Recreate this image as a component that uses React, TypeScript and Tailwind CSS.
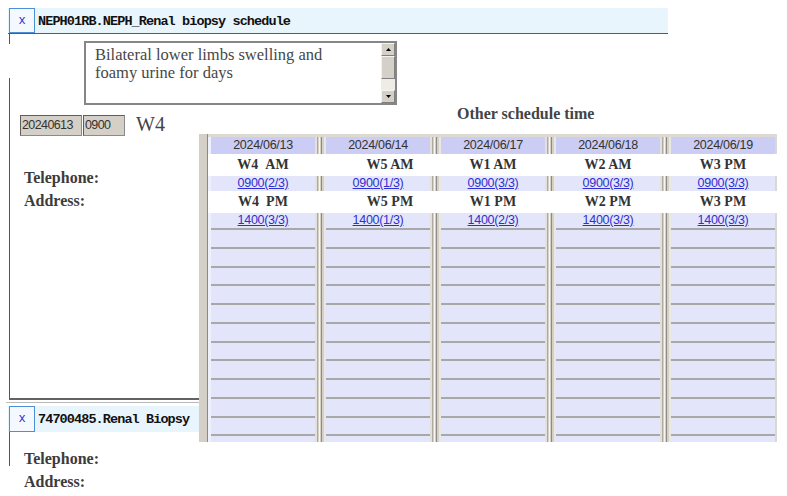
import React, { Fragment } from 'react';

type Col = {
  date: string;
  am: string;
  amLink: string;
  pm: string;
  pmLink: string;
  shift?: boolean;
};

const cols: Col[] = [
  { date: '2024/06/13', am: 'W4\u00a0\u00a0AM', amLink: '0900(2/3)', pm: 'W4\u00a0\u00a0PM', pmLink: '1400(3/3)' },
  { date: '2024/06/14', am: 'W5 AM', amLink: '0900(1/3)', pm: 'W5 PM', pmLink: '1400(1/3)', shift: true },
  { date: '2024/06/17', am: 'W1 AM', amLink: '0900(3/3)', pm: 'W1 PM', pmLink: '1400(2/3)' },
  { date: '2024/06/18', am: 'W2 AM', amLink: '0900(3/3)', pm: 'W2 PM', pmLink: '1400(3/3)' },
  { date: '2024/06/19', am: 'W3 PM', amLink: '0900(3/3)', pm: 'W3 PM', pmLink: '1400(3/3)' },
];

function Sep() {
  return (
    <div className="flex w-[11px] shrink-0">
      <div className="w-[2px] bg-[#e4e1da]" />
      <div className="w-[1px] bg-[#aeaaa2]" />
      <div className="w-[1px] bg-[#d4d0c8]" />
      <div className="w-[1px] bg-[#f7f6f3]" />
      <div className="w-[1px] bg-[#d4d0c8]" />
      <div className="w-[1px] bg-[#8f8b84]" />
      <div className="w-[2px] bg-[#d4d0c8]" />
      <div className="w-[2px] bg-[#eae8e2]" />
    </div>
  );
}

function BandRow({ className, cells }: { className: string; cells: React.ReactNode[] }) {
  return (
    <div className={`flex shrink-0 ${className}`}>
      <div className="w-[3px] shrink-0 bg-[#eef0fc]" />
      {cells.map((c, i) => (
        <Fragment key={i}>
          {c}
          {i < cells.length - 1 && <Sep />}
        </Fragment>
      ))}
      <div className="w-[2px] shrink-0 bg-[#dad8d2]" />
    </div>
  );
}

function TitleRow({ pm }: { pm: boolean }) {
  return (
    <div className="flex h-[22px] shrink-0 gap-[11px] bg-white pl-[3px]">
      {cols.map((c, i) => (
        <div
          key={i}
          className={`flex w-[104px] shrink-0 items-center justify-center font-['Liberation_Serif',serif] text-[14px] font-bold leading-[22px] text-[#333] ${c.shift ? 'pl-[24px]' : ''}`}
        >
          {pm ? c.pm : c.am}
        </div>
      ))}
    </div>
  );
}

function LinkRow({ pm }: { pm: boolean }) {
  return (
    <BandRow
      className="h-[15px]"
      cells={cols.map((c, i) => (
        <div key={i} className="flex w-[104px] shrink-0 items-center justify-center bg-[#e3e5fa]">
          <a className="font-['Liberation_Sans',sans-serif] text-[12.5px] leading-[15px] tracking-[-0.3px] text-[#2f2fd0] underline">
            {pm ? c.pmLink : c.amLink}
          </a>
        </div>
      ))}
    />
  );
}

function XButton({ h }: { h: string }) {
  return (
    <div
      className={`flex w-[26px] shrink-0 items-center justify-center border border-[#4d8fd6] bg-[#f3f9ff] font-['Liberation_Mono',monospace] text-[12px] leading-none text-[#2b2bd6] ${h}`}
    >
      x
    </div>
  );
}

function Arrow({ up }: { up: boolean }) {
  return (
    <svg width="5" height="3" viewBox="0 0 5 3">
      <path d={up ? 'M0 3h5L2.5 0z' : 'M0 0h5L2.5 3z'} fill="#000" />
    </svg>
  );
}

function Raised({ className, children }: { className: string; children?: React.ReactNode }) {
  return (
    <div
      className={`flex items-center justify-center border border-t-[#f4f3ef] border-l-[#f4f3ef] border-b-[#808080] border-r-[#808080] bg-[#d4d0c8] ${className}`}
    >
      {children}
    </div>
  );
}

function ContactLines() {
  return (
    <div className="flex flex-col font-['Liberation_Serif',serif] text-[16px] font-bold leading-[23px] text-[#3c3c3c]">
      <span>Telephone:</span>
      <span>Address:</span>
    </div>
  );
}

export default function App() {
  const emptyRows = Array.from({ length: 12 }, (_, i) => i);
  return (
    <div className="relative h-[496px] w-[787px] overflow-hidden bg-white pl-[8px] pt-[8px] font-['Liberation_Serif',serif]">
      {/* Panel 1 header */}
      <div className="flex h-[26px] w-[660px] items-start border-b border-[#5a5a5a] bg-[#e9f5fd]">
        <div className="ml-[1px]">
          <XButton h="h-[25px]" />
        </div>
        <span className="ml-[3px] pt-[5px] font-['Liberation_Mono',monospace] text-[13.5px] font-bold leading-[17px] tracking-[-0.9px] text-[#111]">
          NEPH01RB.NEPH_Renal biopsy schedule
        </span>
      </div>

      {/* Panel 1 body */}
      <div className="ml-[1px] flex h-[366px] w-[659px] border-b-2 border-[#626262]">
        <div className="flex w-[1px] shrink-0 flex-col">
          <div className="h-[10px] bg-[#555]" />
          <div className="h-[34px]" />
          <div className="flex-1 bg-[#555]" />
        </div>
        <div className="flex flex-1 flex-col">
          {/* textarea */}
          <div className="ml-[74px] mt-[7px] flex h-[64px] w-[313px] border-2 border-[#868686] bg-white">
            <div className="flex flex-1 flex-col pl-[9px] pt-[3px] text-[16.5px] leading-[18px] text-[#474747]">
              <span>Bilateral lower limbs swelling and</span>
              <span>foamy urine for days</span>
            </div>
            <div className="flex w-[14px] flex-col">
              <Raised className="h-[13px]">
                <Arrow up />
              </Raised>
              <Raised className="h-[23px]" />
              <div className="flex-1 bg-[#eeece7]" />
              <Raised className="h-[13px]">
                <Arrow up={false} />
              </Raised>
            </div>
          </div>

          {/* date row */}
          <div className="ml-[10px] mt-[10px] flex items-start">
            <div className="flex h-[21px] w-[62px] items-center border border-[#8a8a8a] border-l-[#5e5e5e] border-t-[#5e5e5e] bg-[#d4d0c8] pl-[1px] font-['Liberation_Sans',sans-serif] text-[12.5px] tracking-[-0.6px] text-[#333]">
              20240613
            </div>
            <div className="ml-[1px] flex h-[21px] w-[42px] items-center border border-[#8a8a8a] border-l-[#5e5e5e] border-t-[#5e5e5e] bg-[#d4d0c8] pl-[1px] font-['Liberation_Sans',sans-serif] text-[12.5px] tracking-[-0.6px] text-[#333]">
              0900
            </div>
            <span className="ml-[11px] text-[20px] leading-[18px] text-[#444]">W4</span>
          </div>

          <div className="mt-[30px] pl-[14px]">
            <ContactLines />
          </div>
        </div>
      </div>

      {/* separator line */}
      <div className="-ml-[2px] mt-[2px] h-[1px] w-[662px] bg-[#b9b9b9]" />

      {/* Panel 2 header */}
      <div className="mt-[3px] flex h-[26px] w-[660px] items-start bg-[#e9f5fd]">
        <div className="ml-[1px]">
          <XButton h="h-[26px]" />
        </div>
        <span className="ml-[3px] pt-[5px] font-['Liberation_Mono',monospace] text-[13.5px] font-bold leading-[17px] tracking-[-0.9px] text-[#111]">
          74700485.Renal Biopsy
        </span>
      </div>
      {/* Panel 2 body */}
      <div className="ml-[1px] h-[34px] border-l border-[#555] pl-[14px] pt-[15px]">
        <ContactLines />
      </div>

      {/* Other schedule time overlay */}
      <div className="absolute left-[199px] top-[104px] w-[578px]">
        <div className="h-[30px] pl-[258px] text-[16px] font-bold leading-[20px] text-[#444]">Other schedule time</div>
        <div className="flex h-[308px] overflow-hidden bg-white">
          <div className="w-[8px] shrink-0 bg-[#d4d0c8]" />
          <div className="w-[1px] shrink-0 bg-[#8d8982]" />
          <div className="flex w-[569px] shrink-0 flex-col">
            <div className="h-[3px] shrink-0 bg-[#dddad3]" />
            <BandRow
              className="h-[17px]"
              cells={cols.map((c, i) => (
                <div
                  key={i}
                  className="flex w-[104px] shrink-0 items-center justify-center bg-[#cbcdf4] font-['Liberation_Sans',sans-serif] text-[12.5px] leading-[17px] tracking-[-0.3px] text-[#333]"
                >
                  {c.date}
                </div>
              ))}
            />
            <TitleRow pm={false} />
            <LinkRow pm={false} />
            <TitleRow pm />
            <LinkRow pm />
            {emptyRows.map((r) => (
              <BandRow
                key={r}
                className="h-[18.75px]"
                cells={cols.map((_, i) => (
                  <div key={i} className="w-[104px] shrink-0 border-t-2 border-[#a8a8a8] bg-[#e3e5fa]" />
                ))}
              />
            ))}
          </div>
        </div>
      </div>
    </div>
  );
}
